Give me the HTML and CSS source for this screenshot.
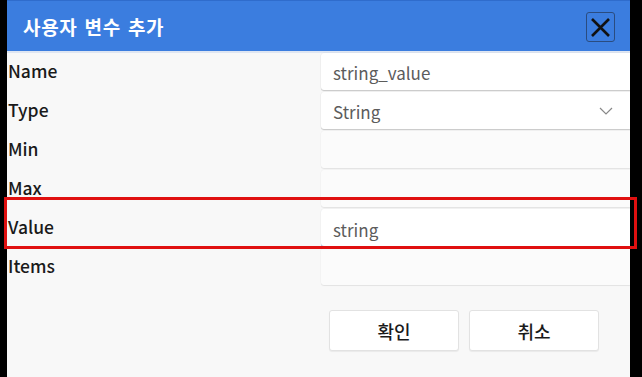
FILE: index.html
```html
<!DOCTYPE html>
<html lang="ko">
<head>
<meta charset="utf-8">
<link rel="stylesheet" href="styles.css">
</head>
<body>
<div class="dialog">
  <div class="header">
    <span class="title">사용자 변수 추가</span>
    <button class="close" aria-label="close">
      <svg width="21" height="21" viewBox="0 0 21 21"><path d="M2 2 L19 19 M19 2 L2 19" stroke="#111" stroke-width="2.6" fill="none"/></svg>
    </button>
  </div>
  <div class="form">
    <div class="label">Name</div>
    <div class="field">string_value</div>
    <div class="label">Type</div>
    <div class="field select">String
      <svg class="chev" width="14" height="8" viewBox="0 0 14 8"><path d="M1 1 L7 7 L13 1" stroke="#888" stroke-width="1.2" fill="none"/></svg>
    </div>
    <div class="label">Min</div>
    <div class="field dim"></div>
    <div class="label">Max</div>
    <div class="field dim"></div>
    <div class="label">Value</div>
    <div class="field focus">string</div>
    <div class="label">Items</div>
    <div class="field dim"></div>
  </div>
  <div class="actions">
    <button class="btn">확인</button>
    <button class="btn">취소</button>
  </div>
  <div class="highlight"></div>
</div>
</body>
</html>
```
FILE: styles.css
```css
html, body {
  margin: 0;
  padding: 0;
  background: #000;
  height: 377px;
  overflow: hidden;
}
body {
  font-family: "Noto Sans CJK KR", "Noto Sans", sans-serif;
}
.dialog {
  position: relative;
  margin-left: 7px;
  width: 623px;
  height: 377px;
  background: #f8f8f8;
}
.header {
  height: 50px;
  background: #3b7ddf;
  border-top: 1px solid #2f6ccc;
  border-bottom: 2px solid #dfe6f2;
  display: flex;
  align-items: center;
  justify-content: space-between;
  padding: 0 15px 0 16px;
  box-sizing: content-box;
}
.title {
  color: #fff;
  font-size: 19px;
  font-weight: 700;
  letter-spacing: 0.7px;
  word-spacing: 1px;
}
.close {
  width: 29px;
  height: 30px;
  padding: 0;
  margin-top: 2px;
  background: transparent;
  border: 1.5px solid #2a4c80;
  border-radius: 3px;
  display: flex;
  align-items: center;
  justify-content: center;
}
.form {
  display: grid;
  grid-template-columns: 314px 1fr;
  grid-auto-rows: 37px;
  row-gap: 2px;
}
.label {
  padding-left: 1px;
  font-size: 17.5px;
  font-weight: 500;
  color: #1a1a1a;
  display: flex;
  align-items: center;
  margin-top: -2px;
}
.field {
  background: #fff;
  border-radius: 3px 0 0 3px;
  box-shadow: 0 1px 1px rgba(0,0,0,0.18), 0 0 0 0.5px rgba(0,0,0,0.04);
  font-size: 17px;
  color: #5c5c5c;
  display: flex;
  align-items: center;
  padding-left: 12px;
  padding-top: 1px;
  position: relative;
}
.field.dim {
  background: #fbfbfb;
  box-shadow: 0 1px 1px rgba(0,0,0,0.07), 0 0 0 0.5px rgba(0,0,0,0.03);
}
.field.focus {
  padding-top: 4px;
  box-shadow: 0 1px 0 #8fb0d6, 0 0 0 0.5px rgba(0,0,0,0.05);
}
.chev {
  position: absolute;
  right: 17px;
  top: 15px;
}
.actions {
  display: flex;
  justify-content: flex-end;
  gap: 10px;
  padding: 25px 31px 0 0;
}
.btn {
  width: 130px;
  height: 41px;
  background: #fff;
  border: 1px solid #e2e2e2;
  border-radius: 3px;
  box-shadow: 0 1px 1px rgba(0,0,0,0.06);
  font-family: "Noto Sans CJK KR", sans-serif;
  font-size: 18px;
  font-weight: 500;
  color: #1a1a1a;
}
.highlight {
  position: absolute;
  left: -3px;
  top: 197px;
  width: 633px;
  height: 52px;
  border: 3px solid #e01010;
  box-sizing: border-box;
}
```
